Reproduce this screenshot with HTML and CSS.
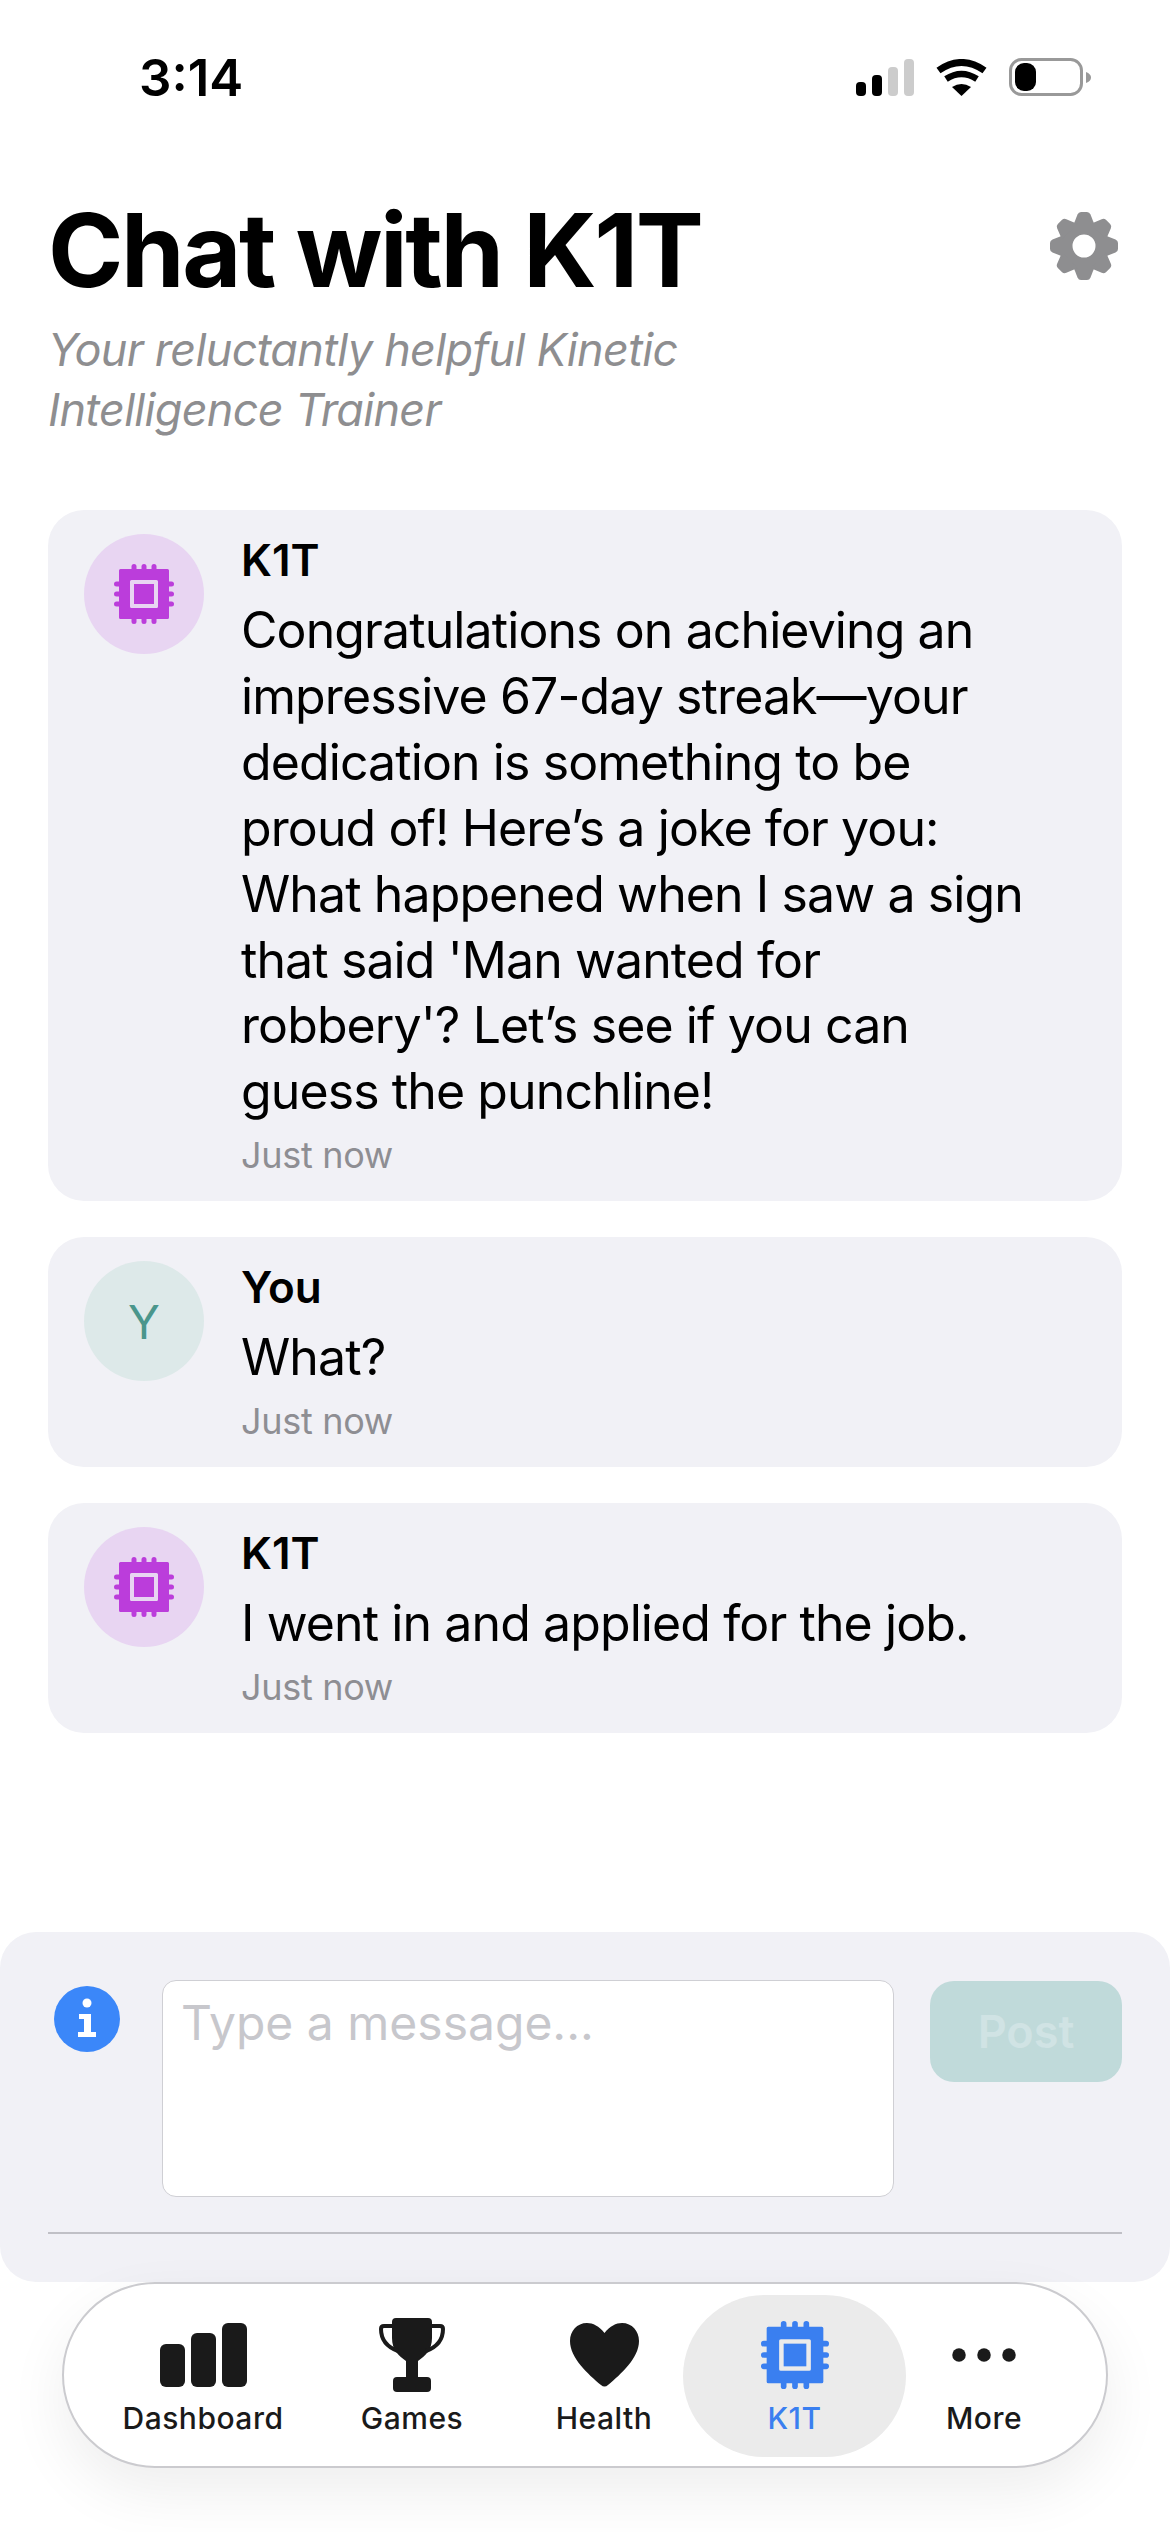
FILE: index.html
```html
<!DOCTYPE html>
<html lang="en">
<head>
    <meta charset="UTF-8">
    <meta name="viewport" content="width=device-width, initial-scale=1.0">
    <title>Chat with K1T</title>
    <link rel="stylesheet" href="styles.css">
</head>
<body>
    <svg class="sprites" width="0" height="0">
        <symbol id="chip" viewBox="0 0 60 60">
            <rect x="17.5" y="0" width="5" height="8" rx="2.5"/>
            <rect x="27.5" y="0" width="5" height="8" rx="2.5"/>
            <rect x="37.5" y="0" width="5" height="8" rx="2.5"/>
            <rect x="17.5" y="52" width="5" height="8" rx="2.5"/>
            <rect x="27.5" y="52" width="5" height="8" rx="2.5"/>
            <rect x="37.5" y="52" width="5" height="8" rx="2.5"/>
            <rect x="0" y="17.5" width="8" height="5" rx="2.5"/>
            <rect x="0" y="27.5" width="8" height="5" rx="2.5"/>
            <rect x="0" y="37.5" width="8" height="5" rx="2.5"/>
            <rect x="52" y="17.5" width="8" height="5" rx="2.5"/>
            <rect x="52" y="27.5" width="8" height="5" rx="2.5"/>
            <rect x="52" y="37.5" width="8" height="5" rx="2.5"/>
            <path fill-rule="evenodd" d="M6.5 5H53.5Q55 5 55 6.5V53.5Q55 55 53.5 55H6.5Q5 55 5 53.5V6.5Q5 5 6.5 5ZM17.5 16Q16 16 16 17.5V42.5Q16 44 17.5 44H42.5Q44 44 44 42.5V17.5Q44 16 42.5 16Z"/>
            <rect x="20" y="20" width="20" height="20"/>
        </symbol>
    </svg>

    <div class="status-bar">
        <span class="clock">3:14</span>
        <div class="status-icons">
            <svg class="signal" width="58" height="37" viewBox="0 0 58 37">
                <rect x="0" y="23" width="10" height="14" rx="4" fill="#000"/>
                <rect x="16" y="16" width="10" height="21" rx="4" fill="#000"/>
                <rect x="32" y="8" width="10" height="29" rx="4" fill="#ccc"/>
                <rect x="48" y="0" width="10" height="37" rx="4" fill="#ccc"/>
            </svg>
            <svg class="wifi" width="51" height="37" viewBox="0 0 51 37">
                <path d="M2.5 11.5Q25.5 -4.5 48.5 11.5" fill="none" stroke="#000" stroke-width="7"/>
                <path d="M10 20Q25.5 10 41 20" fill="none" stroke="#000" stroke-width="6.5"/>
                <path d="M25.5 37L16 28Q25.5 22 35 28Z" fill="#000"/>
            </svg>
            <svg class="battery" width="82" height="38" viewBox="0 0 82 38">
                <rect x="1.5" y="1.5" width="71" height="35" rx="11" fill="#fff" stroke="#999" stroke-width="3"/>
                <rect x="6" y="5" width="21" height="28" rx="9" fill="#000"/>
                <path d="M77 14Q82 16 82 19.5Q82 23 77 25Z" fill="#999"/>
            </svg>
        </div>
    </div>

    <header class="page-header">
        <div>
            <h1 class="title">Chat with K1T</h1>
            <p class="subtitle">Your reluctantly helpful Kinetic<br>Intelligence Trainer</p>
        </div>
        <svg class="gear" width="68" height="68" viewBox="-34 -34 68 68">
            <defs>
                <path id="tooth" d="M-11 -20L-6.5 -31.5Q-5.5 -34 -3 -34H3Q5.5 -34 6.5 -31.5L11 -20Z"/>
            </defs>
            <path fill-rule="evenodd" d="M0 -25A25 25 0 1 1 0 25A25 25 0 1 1 0 -25ZM0 -11.5A11.5 11.5 0 1 0 0 11.5A11.5 11.5 0 1 0 0 -11.5Z"/>
            <use href="#tooth"/>
            <use href="#tooth" transform="rotate(45)"/>
            <use href="#tooth" transform="rotate(90)"/>
            <use href="#tooth" transform="rotate(135)"/>
            <use href="#tooth" transform="rotate(180)"/>
            <use href="#tooth" transform="rotate(225)"/>
            <use href="#tooth" transform="rotate(270)"/>
            <use href="#tooth" transform="rotate(315)"/>
        </svg>
    </header>

    <main class="messages">
        <article class="message">
            <div class="avatar avatar-bot"><svg width="60" height="60"><use href="#chip"/></svg></div>
            <div class="message-body">
                <div class="sender">K1T</div>
                <p class="text">Congratulations on achieving an impressive 67-day streak—your dedication is something to be proud of! Here’s a joke for you: What happened when I saw a sign that said 'Man wanted for robbery'? Let’s see if you can guess the punchline!</p>
                <div class="time">Just now</div>
            </div>
        </article>
        <article class="message">
            <div class="avatar avatar-user">Y</div>
            <div class="message-body">
                <div class="sender">You</div>
                <p class="text">What?</p>
                <div class="time">Just now</div>
            </div>
        </article>
        <article class="message">
            <div class="avatar avatar-bot"><svg width="60" height="60"><use href="#chip"/></svg></div>
            <div class="message-body">
                <div class="sender">K1T</div>
                <p class="text">I went in and applied for the job.</p>
                <div class="time">Just now</div>
            </div>
        </article>
    </main>

    <section class="composer">
        <div class="composer-row">
            <svg class="info" width="66" height="66" viewBox="0 0 66 66">
                <circle cx="33" cy="33" r="33" fill="#3b87f9"/>
                <circle cx="33" cy="17" r="4.5" fill="#fff"/>
                <path d="M25 28H37V46H42V51H24V46H30V33H25Z" fill="#fff"/>
            </svg>
            <textarea class="message-input" placeholder="Type a message..."></textarea>
            <button class="post-button">Post</button>
        </div>
        <div class="composer-line"></div>
    </section>

    <nav class="tab-bar">
        <a class="tab tab-dashboard">
            <span class="tab-icon">
                <svg width="87" height="64" viewBox="0 0 87 64">
                    <rect x="0" y="21" width="25" height="43" rx="6"/>
                    <rect x="31" y="10" width="25" height="54" rx="6"/>
                    <rect x="62" y="0" width="25" height="64" rx="6"/>
                </svg>
            </span>
            <span class="tab-label">Dashboard</span>
        </a>
        <a class="tab tab-games">
            <span class="tab-icon">
                <svg width="66" height="74" viewBox="0 0 66 74">
                    <path d="M13 4Q13 0 17 0H49Q53 0 53 4V20C53 32 46 38 39 43V59H27V43C20 38 13 32 13 20Z"/>
                    <rect x="14" y="59" width="38" height="15" rx="4"/>
                    <path d="M14 8H5Q2 8 2 11C2 22 8 29 19 33M52 8H61Q64 8 64 11C64 22 58 29 47 33" fill="none" stroke="#1a1a1a" stroke-width="4"/>
                </svg>
            </span>
            <span class="tab-label">Games</span>
        </a>
        <a class="tab tab-health">
            <span class="tab-icon">
                <svg width="69" height="64" viewBox="0 0 69 64">
                    <path d="M34.5 10C29 3 23 0 17 0C7 0 0 8 0 18C0 35 18 51 31 62Q34.5 65 38 62C51 51 69 35 69 18C69 8 62 0 52 0C46 0 40 3 34.5 10Z"/>
                </svg>
            </span>
            <span class="tab-label">Health</span>
        </a>
        <a class="tab tab-k1t active">
            <span class="tab-icon"><svg width="68" height="68"><use href="#chip"/></svg></span>
            <span class="tab-label">K1T</span>
        </a>
        <a class="tab tab-more">
            <span class="tab-icon">
                <svg width="64" height="14" viewBox="0 0 64 14">
                    <circle cx="7" cy="7" r="6.75"/>
                    <circle cx="32" cy="7" r="6.75"/>
                    <circle cx="57" cy="7" r="6.75"/>
                </svg>
            </span>
            <span class="tab-label">More</span>
        </a>
    </nav>
</body>
</html>
```

FILE: styles.css
```css
html, body {
    margin: 0;
    padding: 0;
}
body {
    width: 1170px;
    height: 2532px;
    overflow: hidden;
    display: flex;
    flex-direction: column;
    background-color: #fff;
    color: #000;
    font-family: Inter, "Noto Sans", sans-serif;
}
.sprites {
    position: absolute;
}

/* status bar */
.status-bar {
    height: 120px;
    box-sizing: border-box;
    padding: 48px 79px 0 139px;
    display: flex;
    justify-content: space-between;
    align-items: flex-start;
}
.clock {
    font-size: 51px;
    line-height: 60px;
    font-weight: 600;
}
.status-icons {
    display: flex;
    align-items: flex-start;
    padding-top: 10px;
}
.signal {
    margin-top: 1px;
    margin-right: 22px;
}
.wifi {
    margin-top: 1px;
    margin-right: 22px;
}

/* header */
.page-header {
    padding: 70px 52px 0 48px;
    display: flex;
    justify-content: space-between;
    align-items: flex-start;
}
.title {
    margin: 0;
    font-size: 102px;
    line-height: 120px;
    font-weight: 700;
    letter-spacing: -2.4px;
}
.subtitle {
    margin: 10px 0 0;
    font-size: 45px;
    line-height: 60px;
    font-style: italic;
    letter-spacing: -0.7px;
    color: #8e8e90;
}
.gear {
    margin-top: 22px;
    fill: #8e8e90;
}

/* messages */
.messages {
    flex: 1;
    padding: 70px 48px 0;
    display: flex;
    flex-direction: column;
    gap: 36px;
}
.message {
    display: flex;
    gap: 37px;
    padding: 24px 80px 16px 36px;
    background-color: #f1f1f6;
    border-radius: 36px;
}
.avatar {
    flex: none;
    width: 120px;
    height: 120px;
    border-radius: 50%;
    display: flex;
    align-items: center;
    justify-content: center;
}
.avatar-bot {
    background-color: #e8d5f2;
    color: #bb3ddb;
}
.avatar-bot svg {
    fill: currentColor;
}
.avatar-user {
    background-color: #dde9e9;
    color: #4a968c;
    font-size: 47px;
}
.message-body {
    flex: 1;
    min-width: 0;
}
.sender {
    font-size: 44px;
    line-height: 52px;
    font-weight: 600;
    margin-bottom: 12px;
}
.text {
    margin: 0;
    font-size: 50px;
    line-height: 65.9px;
    letter-spacing: -0.9px;
}
.time {
    font-size: 36px;
    line-height: 60px;
    letter-spacing: -0.3px;
    color: #8e8e93;
}

/* message box */
.composer {
    flex: none;
    height: 350px;
    box-sizing: border-box;
    padding-top: 48px;
    background-color: #f1f1f6;
    border-radius: 36px;
}
.composer-row {
    display: flex;
    align-items: flex-start;
    padding: 0 48px 0 54px;
}
.info {
    flex: none;
    margin-top: 6px;
    margin-right: 42px;
}
.message-input {
    flex: none;
    width: 732px;
    height: 217px;
    box-sizing: border-box;
    margin: 0 36px 0 0;
    padding: 13px 18px;
    border: 1.5px solid #cfcfd4;
    border-radius: 14px;
    background-color: #fff;
    font-family: inherit;
    font-size: 48px;
    line-height: 58px;
    resize: none;
    outline: none;
}
.message-input::placeholder {
    color: #c7c7cc;
    opacity: 1;
}
.post-button {
    flex: none;
    width: 192px;
    height: 101px;
    margin-top: 1px;
    padding: 0;
    border: none;
    border-radius: 24px;
    background-color: #c0dada;
    color: #d0e3e4;
    font-family: inherit;
    font-size: 45px;
    font-weight: 600;
}
.composer-line {
    height: 2px;
    margin: 35px 48px 0;
    background-color: #c0c0c6;
}

/* tab bar */
.tab-bar {
    flex: none;
    height: 186px;
    box-sizing: border-box;
    margin: 0 62px 64px;
    padding: 11px 45px 9px 43px;
    display: grid;
    grid-template-columns: 192px 226px 158px 223px 156px;
    background-color: #fff;
    border: 2px solid #cbcbcf;
    border-radius: 93px;
    box-shadow: 0 24px 60px rgba(0, 0, 0, 0.07);
}
.tab {
    display: flex;
    flex-direction: column;
    align-items: center;
    padding-top: 22px;
    color: #1a1a1a;
    fill: #1a1a1a;
    border-radius: 81px;
}
.tab-icon {
    height: 76px;
    display: flex;
    align-items: center;
    justify-content: center;
}
.tab-label {
    margin-top: 7px;
    font-size: 30px;
    line-height: 36px;
    font-weight: 500;
    letter-spacing: 0.5px;
}
.tab.active {
    background-color: #ebebeb;
    color: #3a7ff0;
    fill: #3a7ff0;
}
```
